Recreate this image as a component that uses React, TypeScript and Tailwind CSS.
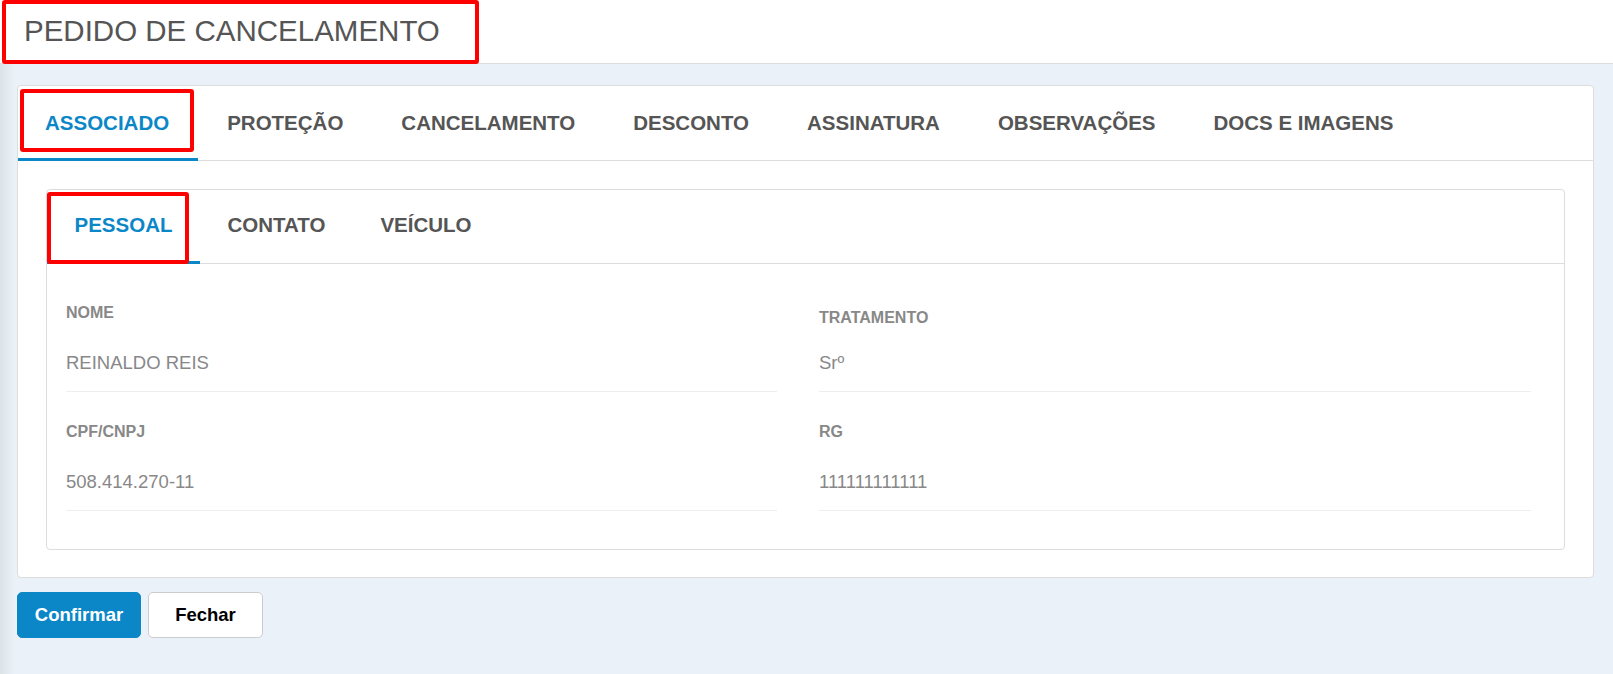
import React from "react";

type Field = { label: string; value: string; labelPad?: string; valueGap?: string };

const mainTabs = [
  "ASSOCIADO",
  "PROTEÇÃO",
  "CANCELAMENTO",
  "DESCONTO",
  "ASSINATURA",
  "OBSERVAÇÕES",
  "DOCS E IMAGENS",
];

const subTabs = ["PESSOAL", "CONTATO", "VEÍCULO"];

const leftFields: Field[] = [
  { label: "NOME", value: "REINALDO REIS" },
  { label: "CPF/CNPJ", value: "508.414.270-11" },
];

const rightFields: Field[] = [
  { label: "TRATAMENTO", value: "Srº", labelPad: "pt-[37px]", valueGap: "mt-[28px]" },
  { label: "RG", value: "111111111111" },
];

function FieldBlock({ f }: { f: Field }) {
  return (
    <div className={`${f.labelPad ?? "pt-[32px]"} pb-[19px] border-b border-[#eeeeee]`}>
      <div className="text-[16px] leading-[16px] font-bold text-[#888888]">{f.label}</div>
      <div className={`${f.valueGap ?? "mt-[33px]"} text-[18.5px] leading-[18px] text-[#888888]`}>
        {f.value}
      </div>
    </div>
  );
}

export default function App() {
  return (
    <div className="relative min-h-screen bg-[#eaf1f8] font-['Liberation_Sans',Arial,sans-serif]">
      {/* page header */}
      <header className="h-[64px] bg-white border-b border-[#dddddd] pl-[24px] pt-[16px]">
        <h1 className="text-[29.5px] leading-[30px] text-[#555555] font-normal">PEDIDO DE CANCELAMENTO</h1>
      </header>

      {/* soft shade along the left edge */}
      <div className="pointer-events-none absolute left-0 top-[64px] bottom-0 w-[14px] bg-linear-to-r from-[#dce2e8] to-transparent" />

      <main className="pl-[17px] pr-[19px] pt-[21px]">
        <section className="rounded-[4px] border border-[#dddddd] bg-white">
          <nav className="flex border-b border-[#dddddd]">
            {mainTabs.map((t, i) => (
              <div
                key={t}
                className={`-mb-px pr-[29px] pt-[27px] pb-[25px] border-b-[3px] text-[20.5px] leading-[20px] font-bold whitespace-nowrap ${
                  i === 0
                    ? "pl-[27px] border-[#0b87c8] text-[#0b87c8]"
                    : "pl-[29px] border-transparent text-[#555555]"
                }`}
              >
                {t}
              </div>
            ))}
          </nav>

          <div className="px-[28px] pt-[28px] pb-[27px]">
            <div className="rounded-[4px] border border-[#dddddd] bg-white">
              <nav className="flex border-b border-[#dddddd]">
                {subTabs.map((t, i) => (
                  <div
                    key={t}
                    className={`-mb-px px-[27.5px] pt-[25px] pb-[26px] border-b-[3px] text-[20.5px] leading-[20px] font-bold whitespace-nowrap ${
                      i === 0 ? "border-[#0b87c8] text-[#0b87c8]" : "border-transparent text-[#555555]"
                    }`}
                  >
                    {t}
                  </div>
                ))}
              </nav>

              <div className="flex gap-[42px] pl-[19px] pt-[9px] pb-[38px]">
                <div className="w-[711px]">
                  {leftFields.map((f) => (
                    <FieldBlock key={f.label} f={f} />
                  ))}
                </div>
                <div className="w-[712px]">
                  {rightFields.map((f) => (
                    <FieldBlock key={f.label} f={f} />
                  ))}
                </div>
              </div>
            </div>
          </div>
        </section>

        <div className="mt-[14px] flex gap-[7px]">
          <button className="h-[46px] w-[124px] rounded-[5px] border border-[#0b87c8] bg-[#0b87c8] text-[18.5px] font-bold text-white">
            Confirmar
          </button>
          <button className="h-[46px] w-[115px] rounded-[5px] border border-[#cccccc] bg-white text-[18.5px] font-bold text-black">
            Fechar
          </button>
        </div>
      </main>

      {/* red highlight frames */}
      <div className="pointer-events-none absolute left-[2px] top-0 h-[64px] w-[477px] rounded-[3px] border-[4px] border-[#ff0000]" />
      <div className="pointer-events-none absolute left-[20px] top-[89px] h-[63px] w-[174px] rounded-[3px] border-[4px] border-[#ff0000]" />
      <div className="pointer-events-none absolute left-[47px] top-[192px] h-[72px] w-[142px] rounded-[3px] border-[4px] border-[#ff0000]" />
    </div>
  );
}
